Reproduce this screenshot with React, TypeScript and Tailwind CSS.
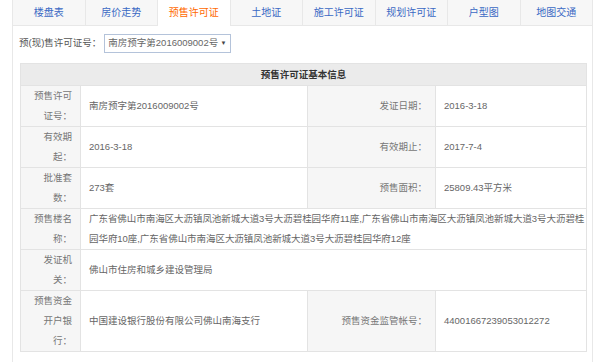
import React from "react";

const tabs = ["楼盘表", "房价走势", "预售许可证", "土地证", "施工许可证", "规划许可证", "户型图", "地图交通"];

const Label = ({ children }: { children: React.ReactNode }) => (
  <td className="bg-[#f6f6f6] border border-[#e3e3e3] text-right pl-[8px] pr-[8px] py-0 align-middle text-[#777]">{children}</td>
);
const Val = ({ children, span }: { children: React.ReactNode; span?: number }) => (
  <td colSpan={span} className="bg-white border border-[#e3e3e3] text-left pl-[8px] pr-[2px] py-0 align-middle text-[#666]">{children}</td>
);

export default function App() {
  return (
    <div className="w-[600px] h-[362px] bg-white overflow-hidden font-['Liberation_Sans','Noto_Sans_CJK_SC',sans-serif] text-[9.5px] leading-[20px]">
      <div className="ml-[12px] w-[581px] h-full border-x border-[#e8e8e8]">
        <div className="flex h-[26px]">
          {tabs.map((t, i) => (
            <div
              key={t}
              className={
                i === 2
                  ? "flex-1 flex items-center justify-center bg-white text-[#ff6a00] border-r border-[#e8e8e8] text-[10px]"
                  : "flex-1 flex items-center justify-center bg-[#f7f7f7] text-[#3a69c4] border-b border-r border-[#e8e8e8] last:border-r-0 text-[10px]"
              }
            >
              {t}
            </div>
          ))}
        </div>
        <div className="flex items-center pl-[6px] pt-[7px] gap-[3px]">
          <span className="text-[#555]">预(现)售许可证号：</span>
          <div className="flex items-center h-[19px] w-[127px] border border-[#b4c3da] bg-white pl-[3px] pr-[4px] text-[#666]">
            <span className="flex-1 whitespace-nowrap">南房预字第2016009002号</span>
            <span className="text-[6px] text-[#444]">▼</span>
          </div>
        </div>
        <table className="ml-[7px] mt-[10px] w-[566px] table-fixed border-collapse">
          <colgroup>
            <col className="w-[60px]" />
            <col className="w-[227px]" />
            <col className="w-[128px]" />
            <col className="w-[151px]" />
          </colgroup>
          <tbody>
            <tr className="h-[22px]">
              <td colSpan={4} className="bg-[#ebebeb] border border-[#e3e3e3] text-center font-bold text-[#333] leading-[20px] py-0">
                预售许可证基本信息
              </td>
            </tr>
            <tr className="h-[40px]">
              <Label>预售许可证号：</Label>
              <Val>南房预字第2016009002号</Val>
              <Label>发证日期：</Label>
              <Val>2016-3-18</Val>
            </tr>
            <tr className="h-[40px]">
              <Label>有效期起：</Label>
              <Val>2016-3-18</Val>
              <Label>有效期止：</Label>
              <Val>2017-7-4</Val>
            </tr>
            <tr className="h-[40px]">
              <Label>批准套数：</Label>
              <Val>273套</Val>
              <Label>预售面积：</Label>
              <Val>25809.43平方米</Val>
            </tr>
            <tr className="h-[41px]">
              <Label>预售楼名称：</Label>
              <Val span={3}>
                <span className="whitespace-nowrap tracking-[-0.05px]">广东省佛山市南海区大沥镇凤池新城大道3号大沥碧桂园华府11座,广东省佛山市南海区大沥镇凤池新城大道3号大沥碧桂</span>
                <br />
                <span className="whitespace-nowrap tracking-[-0.05px]">园华府10座,广东省佛山市南海区大沥镇凤池新城大道3号大沥碧桂园华府12座</span>
              </Val>
            </tr>
            <tr className="h-[41px]">
              <Label>发证机关：</Label>
              <Val span={3}>佛山市住房和城乡建设管理局</Val>
            </tr>
            <tr className="h-[61px]">
              <Label>预售资金开户银行：</Label>
              <Val>中国建设银行股份有限公司佛山南海支行</Val>
              <Label>预售资金监管帐号：</Label>
              <Val>44001667239053012272</Val>
            </tr>
          </tbody>
        </table>
      </div>
    </div>
  );
}
